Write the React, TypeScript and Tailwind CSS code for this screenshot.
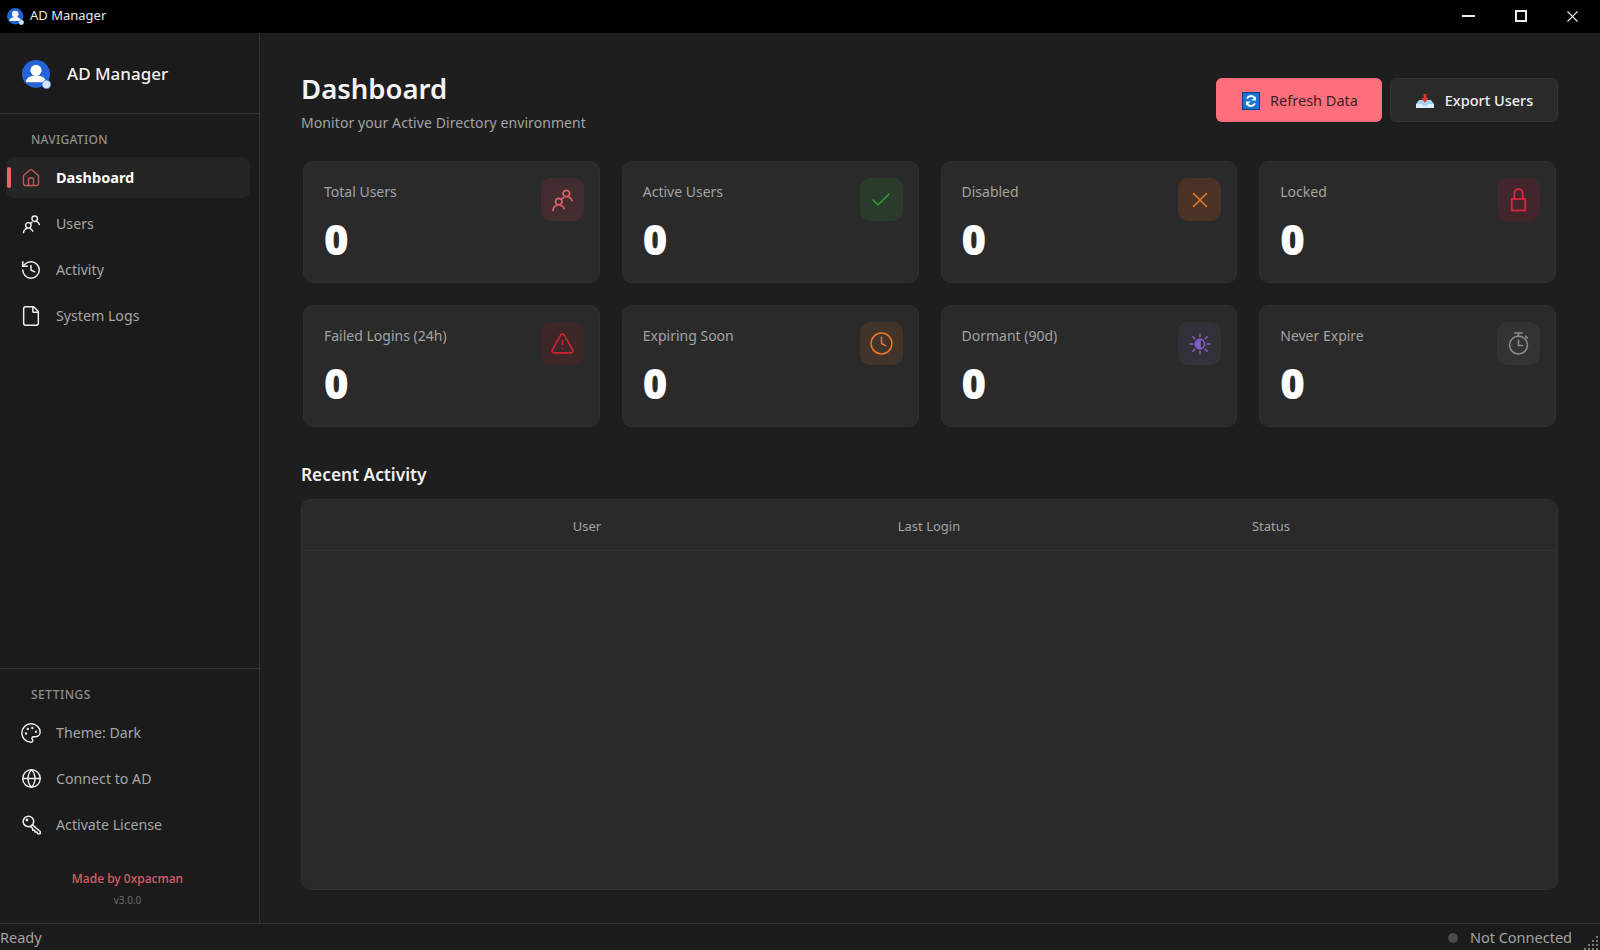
import { Check, Clock, File, Globe, History, House, Palette, TriangleAlert, X } from "lucide-react";
import type { ReactNode } from "react";

function UsersGlyph({ className }: { className?: string }) {
  return (
    <svg viewBox="0 0 24 24" fill="none" stroke="currentColor" strokeWidth="1.7" strokeLinecap="round" className={className}>
      <circle cx="8.8" cy="13.6" r="3.3" />
      <path d="M3 22.4c.3-2.8 2-4.6 4-5.2M10.6 17.2c1.6.5 2.8 1.6 3.6 3.4" />
      <circle cx="16.4" cy="5.6" r="3.3" />
      <path d="M13.4 9.8c-1 .5-1.7 1-2.2 1.6M19.2 9.2c1.4.7 2.3 1.8 2.8 3.4" />
    </svg>
  );
}

function SunHalf({ className }: { className?: string }) {
  return (
    <svg viewBox="0 0 24 24" fill="none" stroke="currentColor" strokeWidth="1.6" strokeLinecap="round" className={className}>
      <circle cx="12" cy="12" r="4.6" />
      <path d="M12 7.4a4.6 4.6 0 0 0 0 9.2z" fill="currentColor" />
      <path d="M12 2v2.6M12 19.4V22M2 12h2.6M19.4 12H22M4.9 4.9l1.9 1.9M17.2 17.2l1.9 1.9M4.9 19.1l1.9-1.9M17.2 6.8l1.9-1.9" />
    </svg>
  );
}

function LockGlyph({ className }: { className?: string }) {
  return (
    <svg viewBox="0 0 24 24" fill="none" stroke="currentColor" strokeWidth="1.7" className={className}>
      <rect x="5.5" y="11.5" width="13" height="11" />
      <path d="M8 11.5V6a4 4 0 0 1 8 0v5.5" />
    </svg>
  );
}

function TimerGlyph({ className }: { className?: string }) {
  return (
    <svg viewBox="0 0 24 24" fill="none" stroke="currentColor" strokeWidth="1.5" strokeLinecap="round" strokeLinejoin="round" className={className}>
      <circle cx="12" cy="13.5" r="8.6" />
      <path d="M8.5 2h7M12 2v3M19 5.2l1.6 1.6M12 9v5h4" />
    </svg>
  );
}

function KeyGlyph({ className }: { className?: string }) {
  return (
    <svg viewBox="0 0 24 24" fill="none" stroke="currentColor" strokeWidth="1.7" strokeLinecap="round" strokeLinejoin="round" className={className}>
      <circle cx="8.5" cy="8.5" r="6" />
      <circle cx="6.8" cy="6.8" r="0.8" fill="currentColor" />
      <path d="M13 12.5l9 7.5v2.5h-3l-1-2-2 .2-.4-2-2.2-.2-.2-2.2-2.6-1.8" />
    </svg>
  );
}

function AppLogo({ className }: { className?: string }) {
  return (
    <svg viewBox="0 0 28 28" className={className}>
      <circle cx="13.5" cy="13.5" r="13.5" fill="#2463d6" />
      <circle cx="13.5" cy="10" r="5.4" fill="#fff" />
      <path d="M3.6 21.4c.6-4.4 4.6-6.4 9.9-6.4s9.2 2 9.8 6.4z" fill="#fff" />
      <circle cx="23.6" cy="23.6" r="4.2" fill="#cfe3fb" stroke="#2463d6" strokeWidth="0.6" />
    </svg>
  );
}

function RefreshGlyph() {
  return (
    <svg viewBox="0 0 18 18" className="w-[18px] h-[18px] shrink-0">
      <rect x="0.5" y="0.5" width="17" height="17" fill="#1875d2" stroke="#0c3f86" />
      <path d="M13 6.2A4.6 4.6 0 0 0 5 6.6M5 11.8a4.6 4.6 0 0 0 8-.4" fill="none" stroke="#fff" strokeWidth="1.9" />
      <path d="M9 8.6h5V4.4zM9 9.4H4v4.2z" fill="#fff" />
    </svg>
  );
}

function ExportGlyph() {
  return (
    <svg viewBox="0 0 18 14" className="w-[18px] h-[14px] shrink-0">
      <path d="M3 6h12l3 4v4H0v-4z" fill="#a8d0f2" />
      <path d="M0 10h6l1 1.5h4l1-1.5h6v4H0z" fill="#dcecfa" />
      <path d="M7.6 0h2.8v4H13L9 8.4 5 4h2.6z" fill="#d5362f" />
    </svg>
  );
}

function NavItem({ icon, label, active }: { icon: ReactNode; label: string; active?: boolean }) {
  return (
    <div className={`relative flex items-center h-[41px] rounded-lg pl-[14px] ${active ? "bg-[#252525]" : ""}`}>
      {active && <span className="absolute left-[1px] top-[10px] w-[3.5px] h-[21px] rounded-sm bg-[#e8636d]" />}
      <span className={`w-[22px] flex justify-center ${active ? "text-[#c65a60]" : "text-[#f0f0f0]"}`}>{icon}</span>
      <span className={`ml-[14px] ${active ? "text-[14.5px] font-bold text-white" : "text-[14.2px] text-[#a6a6a6]"}`}>{label}</span>
    </div>
  );
}

function StatCard({ label, icon, box }: { label: string; icon: ReactNode; box: string }) {
  return (
    <div className="relative h-[122px] rounded-[10px] bg-[#2a2a2a] border border-[#303030] pl-[20px] pt-[20px]">
      <div className="text-[14px] leading-5 text-[#a3a3a3]">{label}</div>
      <div className="mt-[12px] text-[42px] leading-[50px] font-black text-white">0</div>
      <div className={`absolute top-[16px] right-[15px] w-[43px] h-[43px] rounded-[10px] flex items-center justify-center ${box}`}>
        {icon}
      </div>
    </div>
  );
}

const STATS = [
  { label: "Total Users", box: "bg-[#412d30] text-[#e0606a]", icon: <UsersGlyph className="w-[24px] h-[24px]" /> },
  { label: "Active Users", box: "bg-[#2a3b2b] text-[#2f9e35]", icon: <Check className="w-[24px] h-[24px]" strokeWidth={1.5} /> },
  { label: "Disabled", box: "bg-[#4a3326] text-[#e8772a]", icon: <X className="w-[26px] h-[26px]" strokeWidth={1.5} /> },
  { label: "Locked", box: "bg-[#42262c] text-[#dc2640]", icon: <LockGlyph className="w-[25px] h-[25px]" /> },
  { label: "Failed Logins (24h)", box: "bg-[#3d2628] text-[#cf2433]", icon: <TriangleAlert className="w-[25px] h-[25px]" strokeWidth={1.5} /> },
  { label: "Expiring Soon", box: "bg-[#423429] text-[#e8772a]", icon: <Clock className="w-[25px] h-[25px]" strokeWidth={1.4} /> },
  { label: "Dormant (90d)", box: "bg-[#333238] text-[#7c5dc7]", icon: <SunHalf className="w-[24px] h-[24px]" /> },
  { label: "Never Expire", box: "bg-[#333333] text-[#8c8c8c]", icon: <TimerGlyph className="w-[25px] h-[25px]" /> },
];

const grip = [[12, 2], [8, 6], [12, 6], [4, 10], [8, 10], [12, 10], [0, 14], [4, 14], [8, 14], [12, 14]];

export default function App() {
  return (
    <div className="w-[1600px] h-[950px] flex flex-col overflow-hidden bg-[#1e1e1e] text-white font-['Noto_Sans','Open_Sans',sans-serif]">
      {/* title bar */}
      <div className="h-[33px] shrink-0 bg-black flex items-center pl-[7px] pb-[1px]">
        <AppLogo className="w-[17px] h-[17px]" />
        <span className="ml-[6px] text-[13px] text-[#e8e8e8]">AD Manager</span>
        <div className="ml-auto pr-[2px] flex items-center text-[#ededed]">
          <div className="w-[51px] flex justify-center">
            <svg viewBox="0 0 13 2" className="w-[13px] h-[2px]"><rect width="13" height="2" fill="currentColor" /></svg>
          </div>
          <div className="w-[53px] flex justify-center">
            <svg viewBox="0 0 12 12" className="w-[12px] h-[12px]"><rect x="1" y="1" width="10" height="10" fill="none" stroke="currentColor" strokeWidth="2" /></svg>
          </div>
          <div className="w-[51px] flex justify-center"><X className="w-[19px] h-[19px]" strokeWidth={1.4} /></div>
        </div>
      </div>

      <div className="flex-1 flex min-h-0">
        {/* sidebar */}
        <aside className="w-[260px] shrink-0 bg-[#1b1b1b] border-r border-[#333] flex flex-col">
          <div className="h-[81px] shrink-0 border-b border-[#333] flex items-center pl-[22px] pt-[2px]">
            <AppLogo className="w-[29px] h-[29px]" />
            <span className="ml-[16px] text-[17px] font-medium text-[#f2f2f2]">AD Manager</span>
          </div>
          <div className="flex-1 px-[6px] pt-[17px]">
            <div className="pl-[25px] text-[12px] leading-[18px] font-medium text-[#8f8f8f] tracking-[0.3px]">NAVIGATION</div>
            <div className="mt-[8px] w-[244px] flex flex-col gap-[5px]">
              <NavItem active label="Dashboard" icon={<House className="w-[20px] h-[20px]" strokeWidth={1.6} />} />
              <NavItem label="Users" icon={<UsersGlyph className="w-[20px] h-[20px]" />} />
              <NavItem label="Activity" icon={<History className="w-[22px] h-[22px]" strokeWidth={1.6} />} />
              <NavItem label="System Logs" icon={<File className="w-[22px] h-[22px]" strokeWidth={1.6} />} />
            </div>
          </div>
          <div className="h-[255px] shrink-0 border-t border-[#333] px-[6px] pt-[17px]">
            <div className="pl-[25px] text-[12px] leading-[18px] font-medium text-[#8f8f8f] tracking-[0.5px]">SETTINGS</div>
            <div className="mt-[8px] w-[244px] flex flex-col gap-[5px]">
              <NavItem label="Theme: Dark" icon={<Palette className="w-[22px] h-[22px]" strokeWidth={1.6} />} />
              <NavItem label="Connect to AD" icon={<Globe className="w-[21px] h-[21px]" strokeWidth={1.6} />} />
              <NavItem label="Activate License" icon={<KeyGlyph className="w-[21px] h-[21px]" />} />
            </div>
            <div className="mt-[25px] pr-[4px] text-center">
              <div className="text-[12px] leading-[18px] font-medium text-[#d8606a]">Made by 0xpacman</div>
              <div className="mt-[5px] text-[10px] leading-[14px] text-[#6e6e6e]">v3.0.0</div>
            </div>
          </div>
        </aside>

        {/* main */}
        <main className="flex-1 min-w-0 flex flex-col pl-[41px] pr-[42px] pb-[33px]">
          <div className="h-[128px] shrink-0 flex justify-between pt-[45px]">
            <div className="-mt-[8px]">
              <h1 className="text-[27.5px] leading-[38px] font-semibold text-[#f4f4f4]">Dashboard</h1>
              <p className="mt-[5px] text-[14px] leading-5 tracking-[0.08px] text-[#a3a3a3]">Monitor your Active Directory environment</p>
            </div>
            <div className="flex gap-[8px] h-[44px]">
              <button className="w-[166px] pt-[1px] pl-[2px] rounded-md bg-[#fd6f7c] flex items-center justify-center gap-[10px] text-[14.5px] text-[#3d1d22]">
                <RefreshGlyph />
                Refresh Data
              </button>
              <button className="w-[168px] pt-[1px] pl-[1px] rounded-md bg-[#2a2a2a] border border-[#333] flex items-center justify-center gap-[11px] text-[14.5px] font-medium text-[#f0f0f0]">
                <ExportGlyph />
                Export Users
              </button>
            </div>
          </div>

          <div className="ml-[2px] mr-[2px] grid grid-cols-4 gap-[22px]">
            {STATS.map((s) => (
              <StatCard key={s.label} label={s.label} icon={s.icon} box={s.box} />
            ))}
          </div>

          <h2 className="mt-[35px] text-[17.3px] leading-[26px] font-semibold text-[#f0f0f0]">Recent Activity</h2>
          <div className="mt-[11px] flex-1 rounded-[10px] bg-[#2a2a2a] border border-[#303030] overflow-hidden">
            <div className="h-[51px] pt-[3px] border-b border-[#333] grid grid-cols-[570px_114px_570px] items-center text-[13px] text-[#a3a3a3]">
              <span className="text-center">User</span>
              <span className="text-center">Last Login</span>
              <span className="text-center">Status</span>
            </div>
          </div>
        </main>
      </div>

      {/* status bar */}
      <div className="h-[27px] shrink-0 border-t border-[#333] bg-[#1b1b1b] flex items-center relative pt-[2px]">
        <span className="text-[14.5px] text-[#a3a3a3]">Ready</span>
        <div className="ml-auto flex items-center pr-[28px]">
          <span className="w-[10px] h-[10px] rounded-full bg-[#4a4a4a]" />
          <span className="ml-[12px] text-[14.5px] text-[#a3a3a3]">Not Connected</span>
        </div>
        <svg viewBox="0 0 16 16" className="absolute right-0 bottom-0 w-[16px] h-[16px]">
          {grip.map(([x, y]) => (
            <rect key={`${x}-${y}`} x={x} y={y} width="2" height="2" fill="#7a7a7a" />
          ))}
        </svg>
      </div>
    </div>
  );
}
